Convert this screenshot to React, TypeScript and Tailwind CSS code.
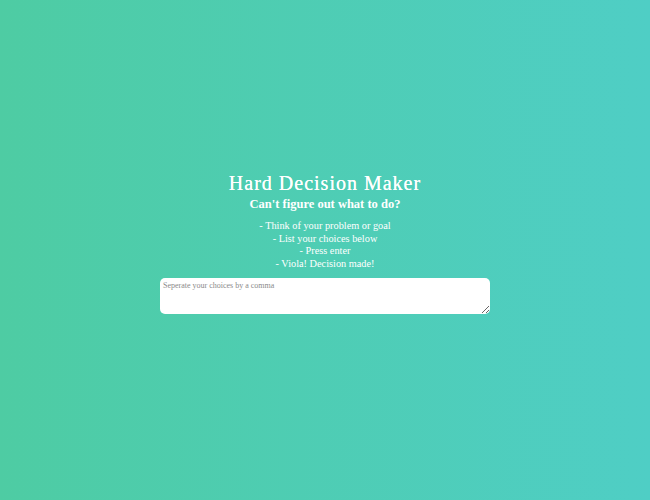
export default function App() {
  return (
    <div
      className="flex h-[500px] w-full flex-col items-center justify-center bg-gradient-to-r from-[#4ecca3] to-[#4fcec5] pb-[15px] text-white"
      style={{ fontFamily: '"Liberation Serif", "DejaVu Serif", serif' }}
    >
      <h1 className="text-[20px] leading-[24px] tracking-[1px] [text-shadow:0_0_0.4px_#fff]">Hard Decision Maker</h1>
      <h2 className="mt-[1px] text-[12.5px] font-bold leading-[17px]">Can't figure out what to do?</h2>
      <div className="mt-[7px] text-center text-[10.3px] leading-[12.5px]">
        <p>- Think of your problem or goal</p>
        <p>- List your choices below</p>
        <p>- Press enter</p>
        <p>- Viola! Decision made!</p>
      </div>
      <textarea
        className="mt-[8px] h-[36px] w-[330px] rounded-[5px] bg-white px-[3px] py-[2px] text-[8px] text-gray-700 outline-none placeholder:text-[#8a8a8a]"
        placeholder="Seperate your choices by a comma"
      />
    </div>
  );
}
